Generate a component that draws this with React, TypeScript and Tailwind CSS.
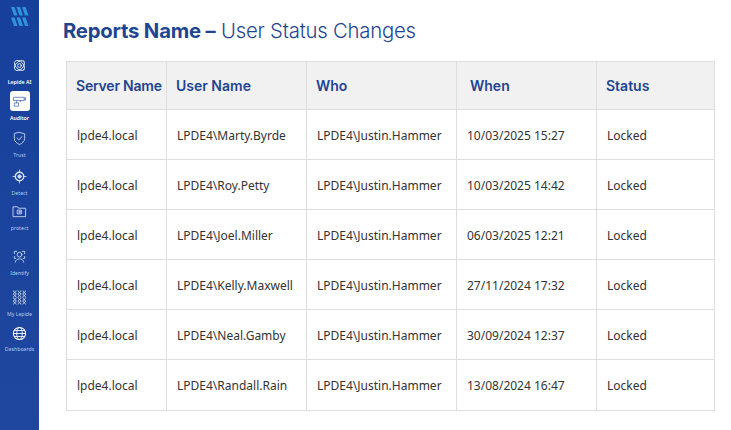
import { type ReactNode } from 'react';

const rows = [
  ['LPDE4\\Marty.Byrde', '10/03/2025 15:27'],
  ['LPDE4\\Roy.Petty', '10/03/2025 14:42'],
  ['LPDE4\\Joel.Miller', '06/03/2025 12:21'],
  ['LPDE4\\Kelly.Maxwell', '27/11/2024 17:32'],
  ['LPDE4\\Neal.Gamby', '30/09/2024 12:37'],
  ['LPDE4\\Randall.Rain', '13/08/2024 16:47'],
];

function Icon({ children, color = '#d5e0f3' }: { children: ReactNode; color?: string }) {
  return (
    <svg viewBox="0 0 16 16" className="w-[15px] h-[15px]" fill="none" stroke={color} strokeWidth="0.9" strokeLinecap="round" strokeLinejoin="round">
      {children}
    </svg>
  );
}

function NavItem({ label, icon, height, pale = true }: { label: string; icon: ReactNode; height: string; pale?: boolean }) {
  return (
    <div className={`flex flex-col items-center ${height}`}>
      <div className="h-[22px] flex items-center justify-center">{icon}</div>
      <span className={`mt-[3px] text-[5.200px] leading-[7px] whitespace-nowrap ${pale ? 'text-blue-100/80' : 'text-white font-semibold'}`}>{label}</span>
    </div>
  );
}

export default function App() {
  return (
    <div className="flex w-[731px] h-[430px] bg-white overflow-hidden font-['Noto_Sans',sans-serif]">
      <aside className="w-[39px] shrink-0 flex flex-col items-center bg-gradient-to-b from-[#16409c] to-[#1f479f]">
        <svg viewBox="0 0 18 19" className="mt-[7px] w-[18px] h-[19px]" fill="#2f93dc">
          <path d="M0 0h3.500l3 8.500H3zM5.500 0H9l3 8.500H8.500zM11 0h3.500l3 8.500H14zM0 10.500h3.500l3 8.500H3zM5.500 10.500H9l3 8.500H8.500zM11 10.500h3.500l3 8.500H14z" />
        </svg>
        <div className="mt-[28px] flex flex-col items-center">
          <NavItem
            label="Lepide AI"
            height="h-[36px]"
            pale={false}
            icon={
              <Icon color="white">
                <circle cx="8" cy="8" r="2" />
                <ellipse cx="8" cy="8" rx="6.500" ry="4" transform="rotate(45 8 8)" />
                <ellipse cx="8" cy="8" rx="6.500" ry="4" transform="rotate(-45 8 8)" />
              </Icon>
            }
          />
          <NavItem
            label="Auditor"
            height="h-[37px]"
            pale={false}
            icon={
              <div className="w-[20px] h-[20px] rounded-[3px] bg-white flex items-center justify-center">
                <Icon color="#5a7ab8">
                  <path d="M2 3.500h11v3.500H2zM13 4.500l1.500-.5v2.500L13 6M5 7v2.500M3 9.500h4v3.500H3zM9 7v1.500" />
                </Icon>
              </div>
            }
          />
          <NavItem
            label="Trust"
            height="h-[38px]"
            icon={
              <Icon>
                <path d="M8 1.500l5.500 1.500v5c0 3-2.500 5-5.500 6.500C5 13 2.500 11 2.500 8V3z" />
                <path d="M5.500 7.500l2 2 3-3.500" />
              </Icon>
            }
          />
          <NavItem
            label="Detect"
            height="h-[35px]"
            icon={
              <Icon>
                <circle cx="8" cy="8" r="4.500" strokeWidth="1.500" />
                <circle cx="8" cy="8" r="1.800" fill="#d5e0f3" />
                <path d="M8 1v2M8 13v2M1 8h2M13 8h2" />
              </Icon>
            }
          />
          <NavItem
            label="protect"
            height="h-[45px]"
            icon={
              <Icon>
                <path d="M1.500 3h4.500l1 1.500h7.500v9h-13z" />
                <rect x="6" y="6.500" width="4" height="4" />
                <circle cx="8" cy="8.500" r="0.800" />
              </Icon>
            }
          />
          <NavItem
            label="Identify"
            height="h-[41px]"
            icon={
              <Icon>
                <path d="M2.500 5V2.500H5M13.500 5V2.500H11M2.500 8v2H4M13.500 8v2H12" />
                <circle cx="8" cy="6" r="2.500" />
                <path d="M3.500 14c.5-2.500 2.500-3.500 4.500-3.500s4 1 4.500 3.500" />
              </Icon>
            }
          />
          <NavItem
            label="My Lepide"
            height="h-[37px]"
            icon={
              <Icon>
                {[3, 8, 13].map((x) =>
                  [1, 8.500].map((y) => (
                    <g key={`${x}-${y}`}>
                      <path d={`M${x - 1.500} ${y}c0 1.700 3 1.700 3 3.250s-3 1.700-3 3.250`} />
                      <path d={`M${x + 1.500} ${y}c0 1.700-3 1.700-3 3.250s3 1.700 3 3.250`} />
                    </g>
                  )),
                )}
              </Icon>
            }
          />
          <NavItem
            label="Dashboards"
            height="h-[30px]"
            icon={
              <Icon color="white">
                <circle cx="8" cy="8" r="6.500" strokeWidth="1.100" />
                <ellipse cx="8" cy="8" rx="3" ry="6.500" />
                <path d="M1.500 8h13M2.500 4.800h11M2.500 11.200h11" />
              </Icon>
            }
          />
        </div>
      </aside>

      <main className="flex-1 min-w-0 pl-[24px] pr-4">
        <h1 className="mt-[16px] h-[29px] leading-[29px] text-[20.300px] text-[#1f4591] font-['Inter',sans-serif] font-light tracking-[-0.2px] whitespace-nowrap">
          <span className="font-bold">Reports Name –</span> User Status Changes
        </h1>
        <table className="ml-[3px] mt-[16px] table-fixed border-collapse w-[648px] text-[12px] text-[#333333]">
          <colgroup>
            <col className="w-[100px]" />
            <col className="w-[140px]" />
            <col className="w-[150px]" />
            <col className="w-[140px]" />
            <col className="w-[118px]" />
          </colgroup>
          <thead>
            <tr className="h-[48px] bg-[#f1f1f2] text-left text-[14px] text-[#1f4591] font-['Inter',sans-serif] font-semibold">
              <th className="border border-[#dedede] pl-[9px] font-semibold whitespace-nowrap tracking-[-0.2px]">Server Name</th>
              <th className="border border-[#dedede] pl-[9px] font-semibold">User Name</th>
              <th className="border border-[#dedede] pl-[9px] font-semibold">Who</th>
              <th className="border border-[#dedede] pl-[13px] font-semibold">When</th>
              <th className="border border-[#dedede] pl-[9px] font-semibold">Status</th>
            </tr>
          </thead>
          <tbody>
            {rows.map(([user, when], i) => (
              <tr key={user} className={i === 5 ? 'h-[51px]' : 'h-[50px]'}>
                <td className="border border-[#dedede] pl-[10px] pt-[2px]">lpde4.local</td>
                <td className="border border-[#dedede] pl-[10px] pt-[2px] whitespace-nowrap">{user}</td>
                <td className="border border-[#dedede] pl-[10px] pt-[2px] whitespace-nowrap">LPDE4\Justin.Hammer</td>
                <td className="border border-[#dedede] pl-[10px] pt-[2px] whitespace-nowrap">{when}</td>
                <td className="border border-[#dedede] pl-[10px] pt-[2px]">Locked</td>
              </tr>
            ))}
          </tbody>
        </table>
      </main>
    </div>
  );
}
